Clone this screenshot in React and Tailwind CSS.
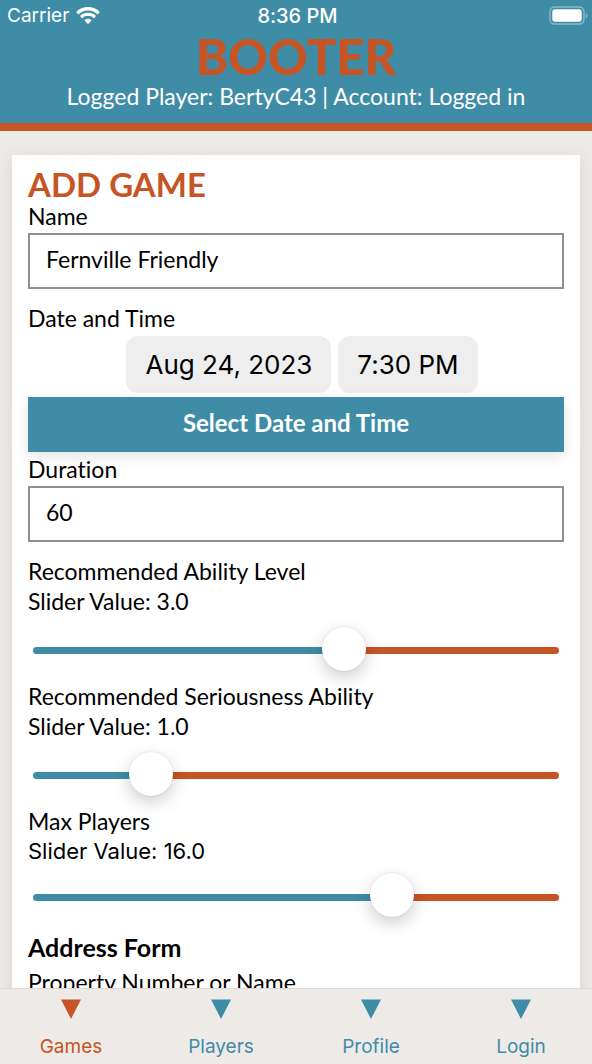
import { useState } from "react";

function StatusBar() {
  return (
    <div className="flex h-8 items-center font-['Inter',sans-serif] text-[19px] leading-8 text-white">
      <div className="flex flex-1 items-center gap-[7px] pl-[7px]">
        <span>Carrier</span>
        <svg viewBox="0 0 24 18" className="h-[18px] w-6" fill="none" stroke="currentColor" aria-label="Wi-Fi">
          <path d="M1.3 6.2a15.2 15.2 0 0 1 21.4 0" strokeWidth="3.4" />
          <path d="M5 10.1a10 10 0 0 1 14 0" strokeWidth="3" />
          <path d="M8.3 13.2a5.3 5.3 0 0 1 7.4 0L12 17.2z" fill="currentColor" stroke="none" />
        </svg>
      </div>
      <span className="text-[20px] font-medium">8:36 PM</span>
      <div className="flex flex-1 justify-end pr-1">
        <svg viewBox="0 0 39 20" className="h-5 w-[39px]" aria-label="Battery">
          <rect x="1" y="1" width="34" height="17" rx="4.5" fill="none" stroke="#8bbaca" strokeWidth="1.3" />
          <rect x="3.300" y="3.300" width="29.400" height="12.400" rx="2.600" fill="#fff" />
          <path d="M36.8 7v5.500q1.700-.9 1.700-2.700T36.800 7z" fill="#8bbaca" />
        </svg>
      </div>
    </div>
  );
}

function TextField({ id, label, value }) {
  return (
    <div className="mb-[14px] flex flex-col gap-0.5">
      <label htmlFor={id}>{label}</label>
      <input
        id={id}
        defaultValue={value}
        className="h-14 w-full border-2 border-[#8f8f8f] bg-white px-4 pb-1 outline-none"
      />
    </div>
  );
}

function SliderField({ id, label, min, max, initial, valueClass = "", trackClass }) {
  const [value, setValue] = useState(initial);
  const percent = ((value - min) / (max - min)) * 100;
  return (
    <div>
      <label htmlFor={id} className="block">{label}</label>
      <p className={valueClass}>Slider Value: {value.toFixed(1)}</p>
      <div className={`flex items-center px-[5px] ${trackClass}`}>
        <input
          id={id}
          type="range"
          min={min}
          max={max}
          value={value}
          onChange={(e) => setValue(Number(e.target.value))}
          style={{ backgroundImage: `linear-gradient(to right, #3f8ca7 ${percent}%, #c65424 ${percent}%)` }}
          className="h-[7px] w-full appearance-none rounded-full [&::-webkit-slider-thumb]:-mt-1 [&::-webkit-slider-thumb]:size-11 [&::-webkit-slider-thumb]:appearance-none [&::-webkit-slider-thumb]:rounded-full [&::-webkit-slider-thumb]:bg-white [&::-webkit-slider-thumb]:shadow-[0_6px_18px_rgba(0,0,0,0.2),0_0_2px_rgba(0,0,0,0.12)]"
        />
      </div>
    </div>
  );
}

const tabs = ["Games", "Players", "Profile", "Login"];

function TabBar() {
  return (
    <nav className="-mx-1 grid shrink-0 grid-cols-4 border-t border-[#dcd8d6] bg-[#eeeae7] font-['Inter',sans-serif] text-[19px]">
      {tabs.map((tab, i) => (
        <a
          key={tab}
          href={`#${tab.toLowerCase()}`}
          className={`flex flex-col items-center pt-[10px] ${i === 0 ? "text-[#c65424]" : "text-[#3f8ca7]"}`}
        >
          <svg viewBox="0 0 20 20" className="size-5" fill="currentColor" aria-hidden="true">
            <path d="M0 .5h20L10 20z" />
          </svg>
          <span className="mt-[13px] mb-[3px] leading-[29px]">{tab}</span>
        </a>
      ))}
    </nav>
  );
}

export default function App() {
  return (
    <div className="flex h-screen flex-col overflow-hidden bg-[#eeeae7] font-['Lato',sans-serif] text-[23px] leading-[30px] text-black [font-variant-ligatures:none]">
      <header className="shrink-0 border-b-8 border-[#c65424] bg-[#3f8ca7] pb-3 text-center text-white">
        <StatusBar />
        <h1 className="text-[49px] leading-[49px] font-black text-[#c65424]">BOOTER</h1>
        <p>Logged Player: BertyC43 | Account: Logged in</p>
      </header>
      <main className="min-h-0 flex-1 overflow-y-auto px-3 pt-6 [scrollbar-width:none]">
        <form className="bg-white px-4 pt-3 pb-6 shadow-[0_4px_16px_rgba(0,0,0,0.1)]">
          <h2 className="text-[33px] leading-[34px] font-bold text-[#c65424]">ADD GAME</h2>
          <TextField id="name" label="Name" value="Fernville Friendly" />
          <fieldset>
            <legend>Date and Time</legend>
            <div className="mt-[3px] mb-1 flex justify-center gap-[7px] pl-3 font-['Inter',sans-serif] text-[26px]">
              <button type="button" className="h-[57px] rounded-xl bg-[#eeeeef] px-[19px]">Aug 24, 2023</button>
              <button type="button" className="h-[57px] rounded-xl bg-[#eeeeef] px-[19px]">7:30 PM</button>
            </div>
            <button
              type="button"
              className="mb-0.5 h-[55px] w-full bg-[#3f8ca7] pb-1 text-[24px] font-bold text-white shadow-[0_4px_14px_rgba(0,0,0,0.12)]"
            >
              Select Date and Time
            </button>
          </fieldset>
          <TextField id="duration" label="Duration" value="60" />
          <SliderField id="ability" label="Recommended Ability Level" min={0} max={5} initial={3} trackClass="h-[65px] pt-1" />
          <SliderField id="seriousness" label="Recommended Seriousness Ability" min={0} max={5} initial={1} trackClass="h-[65px] pt-1" />
          <SliderField
            id="players"
            label="Max Players"
            min={2}
            max={22}
            initial={16}
            valueClass="font-['Inter',sans-serif] text-[22px]"
            trackClass="h-[62px]"
          />
          <h3 className="mt-1 mb-[5px] text-[25px] font-bold">Address Form</h3>
          <label htmlFor="property" className="block">Property Number or Name</label>
          <input id="property" className="mt-0.5 h-14 w-full border-2 border-[#8f8f8f] bg-white px-4 outline-none" />
        </form>
      </main>
      <TabBar />
    </div>
  );
}
